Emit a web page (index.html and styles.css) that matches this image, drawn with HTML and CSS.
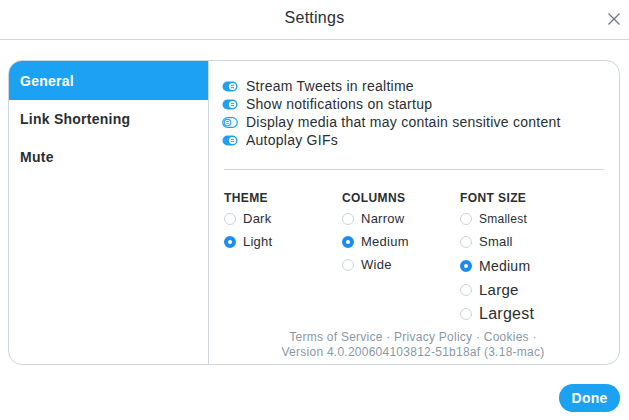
FILE: index.html
```html
<!DOCTYPE html>
<html>
<head>
<meta charset="utf-8">
<link rel="stylesheet" href="styles.css">
</head>
<body>
<header class="header">
  <span class="title">Settings</span>
  <svg class="close" width="14" height="14" viewBox="0 0 14 14"><path d="M1.5 1.5 L12.5 12.5 M12.5 1.5 L1.5 12.5" stroke="#657786" stroke-width="1.3" fill="none"/></svg>
</header>
<div class="card">
  <nav class="sidebar">
    <div class="nav-item active">General</div>
    <div class="nav-item">Link Shortening</div>
    <div class="nav-item">Mute</div>
  </nav>
  <section class="content">
    <div class="toggles">
      <div class="toggle-row"><svg class="tog" width="16" height="11" viewBox="0 0 16 11"><rect x="0.5" y="0.5" width="15" height="10" rx="5" fill="#1da1f2"/><circle cx="10.5" cy="5.5" r="3.6" fill="#fff"/><path d="M9 4.4h3M9 6.6h3" stroke="#1da1f2" stroke-width="1"/></svg>Stream Tweets in realtime</div>
      <div class="toggle-row"><svg class="tog" width="16" height="11" viewBox="0 0 16 11"><rect x="0.5" y="0.5" width="15" height="10" rx="5" fill="#1da1f2"/><circle cx="10.5" cy="5.5" r="3.6" fill="#fff"/><path d="M9 4.4h3M9 6.6h3" stroke="#1da1f2" stroke-width="1"/></svg>Show notifications on startup</div>
      <div class="toggle-row"><svg class="tog" width="16" height="11" viewBox="0 0 16 11"><rect x="0.7" y="0.7" width="14.6" height="9.6" rx="4.8" fill="#fff" stroke="#1da1f2" stroke-width="1.2"/><circle cx="5.5" cy="5.5" r="3.3" fill="#fff" stroke="#1da1f2" stroke-width="1.1"/><path d="M4.2 4.5h2.6M4.2 6.5h2.6" stroke="#1da1f2" stroke-width="0.9"/></svg>Display media that may contain sensitive content</div>
      <div class="toggle-row"><svg class="tog" width="16" height="11" viewBox="0 0 16 11"><rect x="0.5" y="0.5" width="15" height="10" rx="5" fill="#1da1f2"/><circle cx="10.5" cy="5.5" r="3.6" fill="#fff"/><path d="M9 4.4h3M9 6.6h3" stroke="#1da1f2" stroke-width="1"/></svg>Autoplay GIFs</div>
    </div>
    <hr class="divider">
    <div class="options">
      <div class="group g-theme">
        <div class="group-title">Theme</div>
        <div class="radio-row"><span class="radio"></span>Dark</div>
        <div class="radio-row"><span class="radio on"></span>Light</div>
      </div>
      <div class="group g-columns">
        <div class="group-title">Columns</div>
        <div class="radio-row"><span class="radio"></span>Narrow</div>
        <div class="radio-row"><span class="radio on"></span>Medium</div>
        <div class="radio-row"><span class="radio"></span>Wide</div>
      </div>
      <div class="group g-font">
        <div class="group-title">Font Size</div>
        <div class="radio-row fs1"><span class="radio"></span>Smallest</div>
        <div class="radio-row fs2"><span class="radio"></span>Small</div>
        <div class="radio-row fs3"><span class="radio on"></span>Medium</div>
        <div class="radio-row fs4"><span class="radio"></span>Large</div>
        <div class="radio-row fs5"><span class="radio"></span>Largest</div>
      </div>
    </div>
    <footer class="footer">
      <div>Terms of Service · Privacy Policy · Cookies ·</div>
      <div>Version 4.0.200604103812-51b18af (3.18-mac)</div>
    </footer>
  </section>
</div>
<div class="actions">
  <button class="done">Done</button>
</div>
</body>
</html>
```

FILE: styles.css
```css
* { box-sizing: border-box; }
html, body { margin: 0; padding: 0; background: #fff; }
body {
  font-family: "Helvetica Neue", "Liberation Sans", Arial, sans-serif;
  color: #292f33;
  letter-spacing: 0.25px;
  width: 629px;
  height: 420px;
  overflow: hidden;
}
.header {
  position: relative;
  height: 40px;
  border-bottom: 1px solid #ccd6dd;
  display: flex;
  align-items: center;
  justify-content: center;
}
.title {
  font-size: 16px;
  color: #292f33;
  margin-top: -3px;
}
.close {
  position: absolute;
  right: 8px;
  top: 12px;
}
.card {
  margin: 20px 9px 0 8px;
  height: 305px;
  border: 1px solid #ccd6dd;
  border-radius: 14px;
  display: flex;
  overflow: hidden;
}
.sidebar {
  width: 200px;
  border-right: 1px solid #ccd6dd;
  flex-shrink: 0;
}
.nav-item {
  height: 38px;
  padding-left: 11px;
  display: flex;
  align-items: center;
  font-size: 14px;
  font-weight: bold;
  color: #292f33;
}
.nav-item.active {
  background: #1da1f2;
  color: #fff;
  height: 39px;
}
.content {
  flex: 1;
  display: flex;
  flex-direction: column;
  padding: 16px 15px 4px 13px;
}
.toggle-row {
  display: flex;
  align-items: center;
  height: 18px;
  font-size: 14px;
  color: #292f33;
}
.tog {
  margin-right: 8px;
  flex-shrink: 0;
}
.divider {
  border: 0;
  border-top: 1px solid #ccd6dd;
  margin: 20px 0 0 2px;
  height: 0;
}
.options {
  display: flex;
  margin-top: 20px;
  padding-left: 2px;
}
.group-title {
  font-size: 12px;
  font-weight: bold;
  text-transform: uppercase;
  line-height: 16px;
  height: 17px;
  color: #292f33;
  letter-spacing: 0.4px;
}
.g-theme { width: 118px; }
.g-columns { width: 118px; }
.radio-row {
  display: flex;
  align-items: center;
  height: 23px;
  font-size: 13px;
  line-height: 16px;
  color: #292f33;
}
.radio {
  width: 12px;
  height: 12px;
  border-radius: 50%;
  border: 1px solid #ccd6dd;
  margin-right: 7px;
  flex-shrink: 0;
  background: #fff;
}
.radio.on {
  border: 4px solid #1b8cf2;
  background: #fff;
}
.fs1 { font-size: 12px; }
.fs2 { font-size: 13px; height: 24px; }
.fs3 { font-size: 14px; height: 24px; }
.fs4 { font-size: 15px; height: 24px; }
.fs5 { font-size: 16px; height: 24px; }
.footer {
  margin-top: auto;
  text-align: center;
  font-size: 12px;
  line-height: 15px;
  color: #8899a6;
}
.actions {
  display: flex;
  justify-content: flex-end;
  padding: 19px 9px 0 0;
}
.done {
  background: #1da1f2;
  color: #fff;
  border: 0;
  border-radius: 14px;
  height: 28px;
  width: 61px;
  font-family: inherit;
  font-size: 14px;
  font-weight: bold;
  letter-spacing: 0.2px;
  padding: 0;
}
```
